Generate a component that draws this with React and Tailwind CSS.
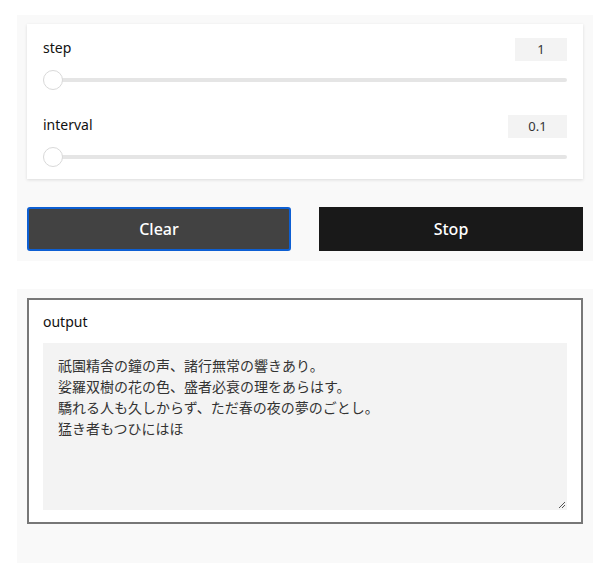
import React from "react";

const ui = { fontFamily: '"Noto Sans", "Liberation Sans", sans-serif' };
const jp = { fontFamily: '"Noto Sans CJK JP", "Noto Sans", sans-serif' };

const lines = [
  "祇園精舎の鐘の声、諸行無常の響きあり。",
  "娑羅双樹の花の色、盛者必衰の理をあらはす。",
  "驕れる人も久しからず、ただ春の夜の夢のごとし。",
  "猛き者もつひにはほ",
];

function SliderRow({ label, value, boxW, last }) {
  return (
    <div className={last ? "" : "mb-[25px]"}>
      <div className="flex items-center justify-between h-[23px]">
        <span className="text-[14px] text-[#111] pb-[4px]">{label}</span>
        <div
          className={`${boxW} h-[23px] bg-[#f3f3f3] flex items-center justify-center text-[13px] text-[#333]`}
        >
          {value}
        </div>
      </div>
      {/* track + thumb */}
      <div className="relative h-[20px] mt-[9px] flex items-center">
        <div className="w-full h-[4px] rounded-full bg-[#e5e5e5]" />
        <div className="absolute left-0 top-0 w-[20px] h-[20px] rounded-full bg-white border border-[#d9d9d9]" />
      </div>
    </div>
  );
}

export default function App() {
  return (
    <div className="min-h-screen bg-white pt-[15px]" style={ui}>
      {/* controls panel */}
      <div className="mx-[17px] w-[576px] bg-[#f9f9f9] px-[10px] pt-[9px] pb-[10px]">
        <div className="bg-white shadow-[0_1px_3px_rgba(0,0,0,0.12)] px-4 pt-[14px] pb-[12px]">
          <SliderRow label="step" value="1" boxW="w-[52px]" />
          <SliderRow label="interval" value="0.1" boxW="w-[59px]" last />
        </div>

        <div className="grid grid-cols-2 gap-[28px] mt-[28px]">
          <button className="h-[44px] bg-[#424242] border-2 border-[#0d5fd3] rounded-[3px] text-white text-[16px] font-medium">
            Clear
          </button>
          <button className="h-[44px] bg-[#191919] text-white text-[16px] font-medium">
            Stop
          </button>
        </div>
      </div>

      {/* output panel */}
      <div className="mx-[17px] mt-[28px] w-[576px] bg-[#f9f9f9] px-[10px] pt-[9px] pb-[39px]">
        <div className="bg-white border-2 border-[#777] px-[14px] pt-[12px] pb-[12px]">
          <div className="text-[14px] text-[#111] h-[20px] leading-[20px] mb-[11px]">output</div>
          <div
            className="relative h-[167px] bg-[#f3f3f3] pl-[15px] pt-[12px] text-[14px] leading-[21px] text-[#333]"
            style={jp}
          >
            {lines.map((l, i) => (
              <div key={i}>{l}</div>
            ))}
            {/* resize grip */}
            <svg className="absolute right-[1px] bottom-[1px]" width="8" height="8" viewBox="0 0 8 8">
              <path d="M7 1L1 7M7 4L4 7" stroke="#555" strokeWidth="1" />
            </svg>
          </div>
        </div>
      </div>
    </div>
  );
}
